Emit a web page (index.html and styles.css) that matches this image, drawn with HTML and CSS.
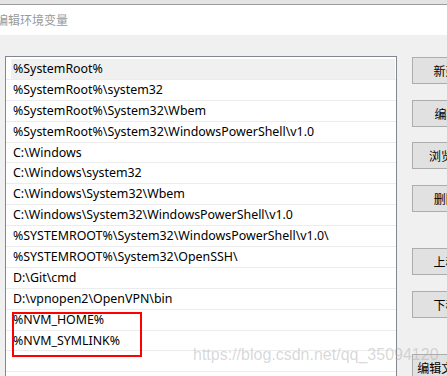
FILE: index.html
```html
<!DOCTYPE html>
<html lang="zh-CN">

<head>
    <meta charset="UTF-8">
    <meta name="viewport" content="width=device-width, initial-scale=1.0">
    <title>编辑环境变量</title>

    <link rel="stylesheet" href="styles.css">
</head>

<body>
    <div class="topbar"></div>
    <div class="titlebar">编辑环境变量</div>

    <div class="main">
        <div class="list">
            <div class="row on"><span>%SystemRoot%</span></div>
            <div class="row"><span>%SystemRoot%\system32</span></div>
            <div class="row"><span>%SystemRoot%\System32\Wbem</span></div>
            <div class="row"><span>%SystemRoot%\System32\WindowsPowerShell\v1.0</span></div>
            <div class="row"><span>C:\Windows</span></div>
            <div class="row"><span>C:\Windows\system32</span></div>
            <div class="row"><span>C:\Windows\System32\Wbem</span></div>
            <div class="row"><span>C:\Windows\System32\WindowsPowerShell\v1.0</span></div>
            <div class="row"><span>%SYSTEMROOT%\System32\WindowsPowerShell\v1.0\</span></div>
            <div class="row"><span>%SYSTEMROOT%\System32\OpenSSH\</span></div>
            <div class="row"><span>D:\Git\cmd</span></div>
            <div class="row"><span>D:\vpnopen2\OpenVPN\bin</span></div>
            <div class="mark">
                <div class="row"><span>%NVM_HOME%</span></div>
                <div class="row"><span>%NVM_SYMLINK%</span></div>
                <!-- 红框标注 -->
                <div class="redbox"></div>
            </div>
            <div class="row"><span></span></div>
        </div>

        <div class="buttons">
            <a href="javascript:;" class="btn">新建(N)</a>
            <a href="javascript:;" class="btn">编辑(E)</a>
            <a href="javascript:;" class="btn">浏览(B)...</a>
            <a href="javascript:;" class="btn">删除(D)</a>
            <div class="space"></div>
            <a href="javascript:;" class="btn">上移(U)</a>
            <a href="javascript:;" class="btn">下移(O)</a>
            <div class="space"></div>
            <a href="javascript:;" class="btn">编辑文本(T)...</a>
        </div>
    </div>

    <div class="watermark">https://blog.csdn.net/qq_35094120</div>
</body>

</html>
```

FILE: styles.css
```css
body,
div,
a,
span {
    margin: 0;
    padding: 0;
}

body {
    background-color: #f0f0f0;
    font-family: "Noto Sans", "Noto Sans CJK SC", sans-serif;
    font-size: 12.4px;
    color: #000;
    overflow: hidden;
    position: relative;
    height: 376px;
}

.topbar {
    height: 4px;
    background-color: #e4e4e4;
    border-bottom: 1px solid #9c9c9c;
}

.titlebar {
    height: 30px;
    line-height: 30px;
    background-color: #fff;
    color: #9a9a9a;
    font-family: "Noto Sans CJK SC", sans-serif;
    font-size: 12px;
    text-indent: -4px;
    white-space: nowrap;
}

.main {
    display: flex;
    padding: 21px 0 0 5px;
}

/* 列表框 */
.list {
    flex-shrink: 0;
    width: 392px;
    height: 330px;
    box-sizing: border-box;
    border: 1px solid #828790;
    border-bottom: 0;
    background-color: #fff;
    padding-top: 2px;
    overflow: hidden;
}

.row {
    height: 19.9px;
    line-height: 19px;
    border-bottom: 1px solid #ececec;
    white-space: nowrap;
}

.row span {
    display: block;
    height: 100%;
    margin: 0 1px 0 5px;
    padding-left: 2px;
}

.row.on span {
    background-color: #f0f0f0;
}

.mark {
    position: relative;
}

.redbox {
    position: absolute;
    left: 6px;
    top: 2px;
    width: 130px;
    height: 45px;
    box-sizing: border-box;
    border: 2px solid #f00;
}

/* 右侧按钮 */
.buttons {
    flex-shrink: 0;
    display: flex;
    flex-direction: column;
    margin-left: 15px;
    padding-top: 1px;
}

.btn {
    display: block;
    width: 84px;
    height: 27px;
    box-sizing: border-box;
    line-height: 25px;
    text-align: center;
    text-decoration: none;
    color: #000;
    font-family: "Noto Sans CJK SC", sans-serif;
    font-size: 12px;
    background-color: #e1e1e1;
    border: 1px solid #adadad;
    margin-bottom: 15.5px;
    white-space: nowrap;
}

.space {
    height: 21px;
}

.watermark {
    position: absolute;
    left: 193px;
    top: 346px;
    font-family: "Liberation Sans", Arial, sans-serif;
    font-size: 16px;
    color: rgba(170, 170, 170, .45);
    white-space: nowrap;
}
```
